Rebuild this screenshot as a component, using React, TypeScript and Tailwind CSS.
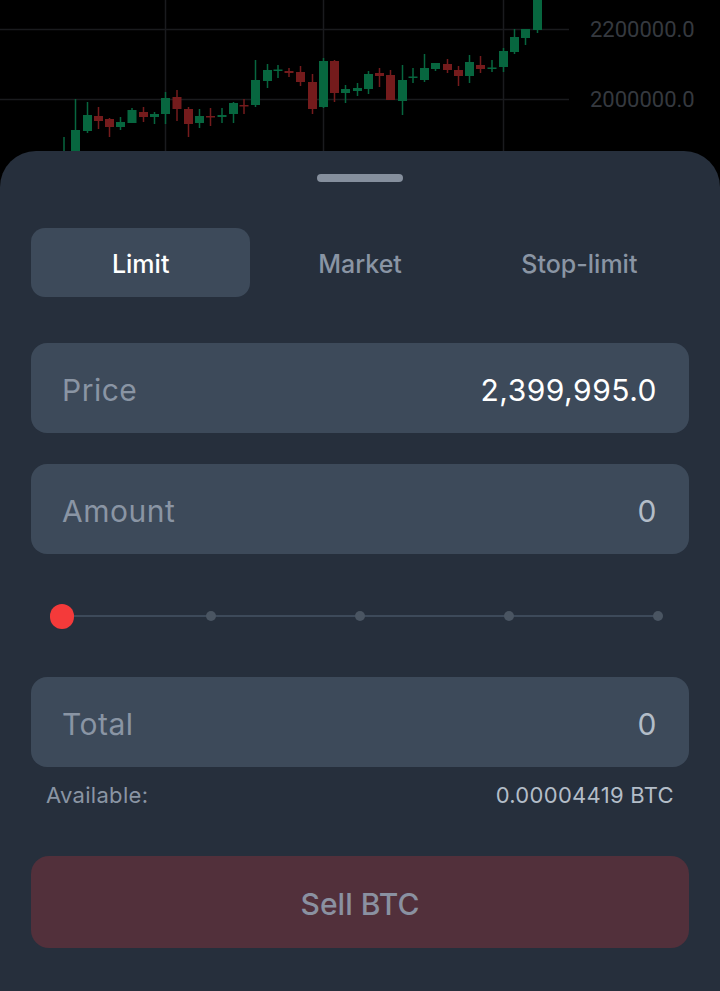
type Candle = [number, number, number, number, number, boolean];

// cx, bodyTop, bodyBottom, wickTop, wickBottom, up
const candles: Candle[] = [
  [64, 152, 160, 137, 160, true],
  [75.5, 130, 160, 99, 160, true],
  [87.5, 115, 131, 102, 133, true],
  [98.5, 116, 121, 107, 129, false],
  [109.5, 119, 127, 118, 137, false],
  [120.5, 122, 127, 117, 130, true],
  [132, 110, 123, 108, 123, true],
  [143.5, 112, 117, 107, 122, false],
  [154.5, 114, 117, 112, 124, true],
  [165.5, 98, 114, 92, 124, true],
  [177, 97, 109, 90, 121, false],
  [188.5, 109, 124, 107, 137, false],
  [199.5, 116, 123, 109, 128, true],
  [210.5, 116, 117.5, 108, 126, false],
  [222, 115, 117, 108, 123, true],
  [233.5, 103, 114, 102, 123, true],
  [244, 105, 106.5, 99, 114, false],
  [255.5, 80, 105, 60, 107, true],
  [267.5, 70, 81, 64, 88, true],
  [278, 69.5, 71, 65, 78, true],
  [289, 71, 73, 68, 77, false],
  [300.5, 72, 82, 66, 86, false],
  [312.5, 82, 109, 74, 114, false],
  [323.5, 61, 107, 58, 108, true],
  [334.5, 61, 93, 60, 102, false],
  [345.5, 89, 93, 85, 103, true],
  [357.5, 88, 91, 83, 96, true],
  [368.5, 74, 89, 71, 94, true],
  [379.5, 73, 76, 68, 87, false],
  [390.5, 75, 100, 70, 100, false],
  [402.5, 80, 101, 65, 115, true],
  [413, 76.5, 78, 68, 83, true],
  [424.5, 68, 80, 54, 82, true],
  [435.5, 63, 69, 63, 71, true],
  [447.5, 64, 70, 59, 73, false],
  [458.5, 70, 76, 66, 86, false],
  [469.5, 62, 76, 55, 83, true],
  [480.5, 65, 69, 56, 73, false],
  [492, 67.5, 69, 60, 72, true],
  [503.5, 51, 67, 48, 72, true],
  [514.5, 37, 52, 29, 54, true],
  [525.5, 29, 38, 29, 45, true],
  [537.5, -2, 30, -2, 33, true],
];

function Chart() {
  return (
    <div className="h-[151px] bg-black overflow-hidden">
      <svg width="720" height="151" viewBox="0 0 720 151">
        <g stroke="#1a1b1e" strokeWidth="1.5">
          <line x1="0" y1="29.5" x2="569" y2="29.5" />
          <line x1="0" y1="99.5" x2="569" y2="99.5" />
          <line x1="165.5" y1="0" x2="165.5" y2="151" />
          <line x1="323.5" y1="0" x2="323.5" y2="151" />
          <line x1="503.5" y1="0" x2="503.5" y2="151" />
        </g>
        {candles.map(([cx, bt, bb, wt, wb, up], i) => {
          const c = up ? "#07663f" : "#741b1c";
          return (
            <g key={i}>
              <line x1={cx} y1={wt} x2={cx} y2={wb} stroke={c} strokeWidth="1.5" />
              <rect x={cx - 4.5} y={bt} width="9" height={Math.max(bb - bt, 1.5)} fill={c} />
            </g>
          );
        })}
        <text x="590" y="37" fill="#35393f" fontSize="22" fontFamily="Roboto, sans-serif">2200000.0</text>
        <text x="590" y="107" fill="#35393f" fontSize="22" fontFamily="Roboto, sans-serif">2000000.0</text>
      </svg>
    </div>
  );
}

function Field({ label, value, bright }: { label: string; value: string; bright?: boolean }) {
  return (
    <div className="h-[90px] rounded-[16px] bg-[#3d4a5a] flex items-center justify-between pl-[31px] pr-[32px] pt-[4px] tracking-[0.5px]">
      <span className="text-[30px] text-[#8a95a4]">{label}</span>
      <span className={bright ? "text-[30px] text-white" : "text-[30px] text-[#b3bdc8]"}>{value}</span>
    </div>
  );
}

export default function App() {
  return (
    <div className="min-h-[991px] bg-black font-['Inter',sans-serif]">
      <Chart />
      <div className="rounded-t-[36px] bg-[#262f3c] px-[31px] pb-[43px]">
        <div className="flex justify-center pt-[23px]">
          <div className="w-[86px] h-[8px] rounded-full bg-[#858f9d]" />
        </div>

        <div className="grid grid-cols-3 mt-[46px] h-[69px]">
          <div className="rounded-[14px] bg-[#3d4a5a] flex items-center justify-center pt-[4px] text-[25px] font-medium text-white">Limit</div>
          <div className="flex items-center justify-center pt-[4px] text-[25px] font-medium text-[#8a95a4]">Market</div>
          <div className="flex items-center justify-center pt-[4px] text-[25px] font-medium text-[#8a95a4]">Stop-limit</div>
        </div>

        <div className="mt-[46px]">
          <Field label="Price" value="2,399,995.0" bright />
        </div>
        <div className="mt-[31px]">
          <Field label="Amount" value="0" />
        </div>

        <div className="relative mt-[49px] mx-[19px] h-[26px] flex items-center justify-between">
          <div className="absolute left-[12px] right-[12px] top-[12px] h-[2px] bg-[#3d4a5a]" />
          <div className="relative w-6 flex justify-center">
            <div className="w-[25px] h-[25px] rounded-full bg-[#f43a3a]" />
          </div>
          {[0, 1, 2, 3].map((i) => (
            <div key={i} className="relative w-6 flex justify-center">
              <div className="w-[10px] h-[10px] rounded-full bg-[#4a5562]" />
            </div>
          ))}
        </div>

        <div className="mt-[48px]">
          <Field label="Total" value="0" />
        </div>

        <div className="mt-[14px] h-[28px] px-[15px] flex items-center justify-between text-[22px] tracking-[0.3px]">
          <span className="text-[#8a95a4]">Available:</span>
          <span className="text-[#b3bdc8]">0.00004419 BTC</span>
        </div>

        <button className="mt-[47px] w-full h-[92px] rounded-[18px] bg-[#52303b] pt-[4px] text-[30px] font-medium text-[#8a91a1]">
          Sell BTC
        </button>
      </div>
    </div>
  );
}
